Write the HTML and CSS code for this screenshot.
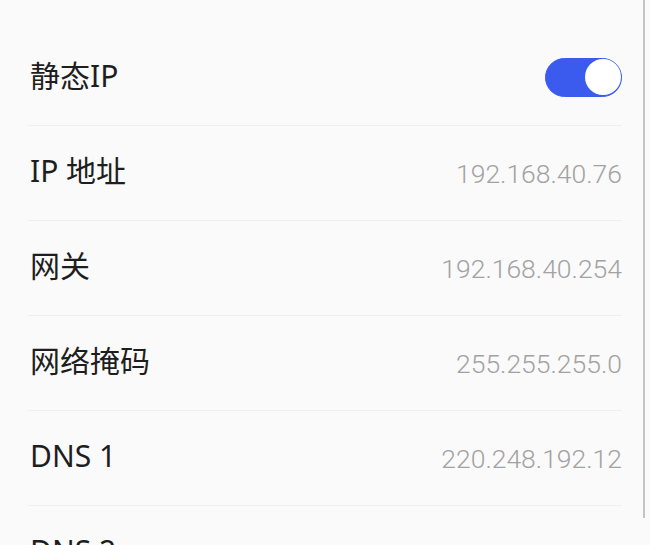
FILE: index.html
```html
<!DOCTYPE html>
<html lang="zh-CN">
<head>
    <meta charset="UTF-8">
    <title>静态IP</title>
    <link rel="stylesheet" href="styles.css">
</head>
<body>
    <div id="page">
        <ul id="settings">
            <li class="row">
                <span class="label">静态IP</span>
                <span class="switch on"><span class="knob"></span></span>
            </li>
            <li class="row">
                <span class="label">IP 地址</span>
                <span class="value">192.168.40.76</span>
            </li>
            <li class="row">
                <span class="label">网关</span>
                <span class="value">192.168.40.254</span>
            </li>
            <li class="row">
                <span class="label">网络掩码</span>
                <span class="value">255.255.255.0</span>
            </li>
            <li class="row">
                <span class="label">DNS 1</span>
                <span class="value">220.248.192.12</span>
            </li>
            <li class="row">
                <span class="label">DNS 2</span>
            </li>
        </ul>
        <div id="scrollbar"></div>
    </div>
</body>
</html>
```

FILE: styles.css
```css
*{
    padding: 0;
    margin: 0;
    box-sizing: border-box;
}
html,body{
    height: 100%;
    overflow: hidden;
}
body{
    background: #fafafa;
    font-family: "Noto Sans", "Noto Sans CJK SC", sans-serif;
    color: #1e1e1e;
}
#page{
    position: relative;
    height: 100%;
    padding-top: 31px;
}
#settings{
    list-style: none;
    margin: 0 28px 0 28px;
}
.row{
    display: flex;
    align-items: center;
    justify-content: space-between;
    height: 95px;
    padding: 0 0 4px 2px;
    border-bottom: 1px solid #efefef;
}
.label{
    font-size: 30px;
    line-height: 1;
}
.value{
    font-family: "Roboto", "Noto Sans", sans-serif;
    font-weight: 300;
    font-size: 26.5px;
    color: #a2a2a2;
    padding-top: 4px;
}
.switch{
    display: flex;
    justify-content: flex-end;
    width: 77px;
    height: 39px;
    margin-top: 2px;
    border-radius: 20px;
    background: #3b5bef;
    border: 1.5px solid #3b5bef;
}
.knob{
    width: 36px;
    height: 36px;
    border-radius: 50%;
    background: #ffffff;
}
#scrollbar{
    position: absolute;
    right: 5px;
    top: 0;
    width: 2px;
    height: 518px;
    background: #c4c4c4;
}
```
